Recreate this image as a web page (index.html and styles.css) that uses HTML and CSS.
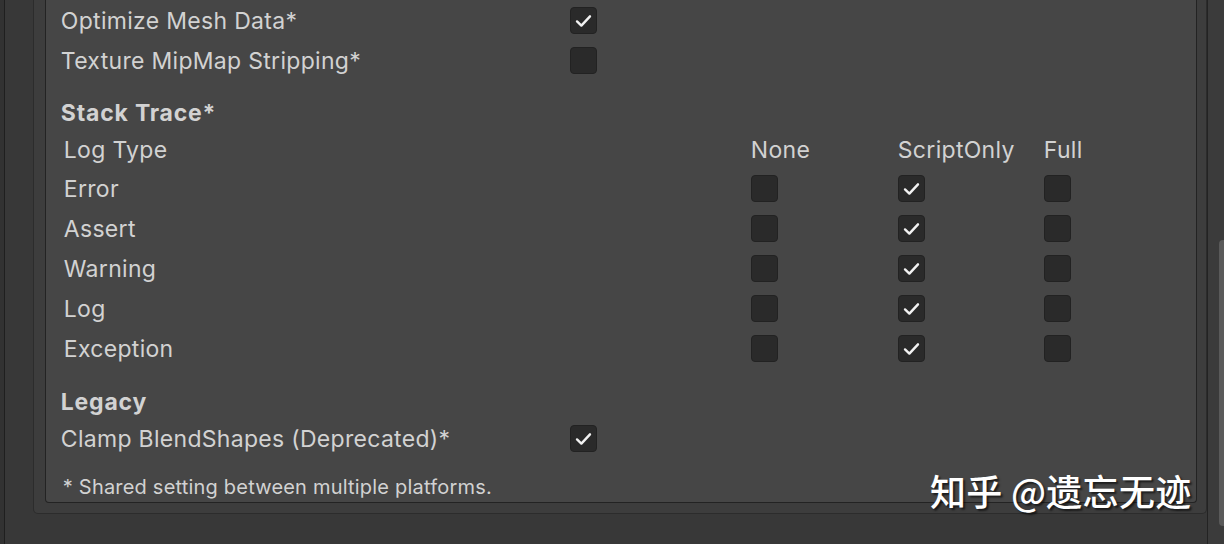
FILE: index.html
```html
<html>
    <head>
        <title>Player Settings</title>
        <meta charset="utf-8">
        <link rel="stylesheet" href="styles.css">
    </head>
    <body>
        <div class="sidebar"></div>
        <div class="main">
            <div class="frame">
                <div class="panel">
                    <div class="row">
                        <span class="label">Optimize Mesh Data*</span>
                        <span class="check"><svg viewBox="0 0 27 27"><polyline points="6.5,14.5 11.2,19 20.5,9"/></svg></span>
                    </div>
                    <div class="row">
                        <span class="label">Texture MipMap Stripping*</span>
                        <span class="check"></span>
                    </div>

                    <div class="heading stack">Stack Trace*</div>
                    <div class="trace">
                        <div class="trace-row trace-head">
                            <span>Log Type</span><span>None</span><span>ScriptOnly</span><span>Full</span>
                        </div>
                        <div class="trace-row">
                            <span>Error</span>
                            <span class="check"></span>
                            <span class="check"><svg viewBox="0 0 27 27"><polyline points="6.5,14.5 11.2,19 20.5,9"/></svg></span>
                            <span class="check"></span>
                        </div>
                        <div class="trace-row">
                            <span>Assert</span>
                            <span class="check"></span>
                            <span class="check"><svg viewBox="0 0 27 27"><polyline points="6.5,14.5 11.2,19 20.5,9"/></svg></span>
                            <span class="check"></span>
                        </div>
                        <div class="trace-row">
                            <span>Warning</span>
                            <span class="check"></span>
                            <span class="check"><svg viewBox="0 0 27 27"><polyline points="6.5,14.5 11.2,19 20.5,9"/></svg></span>
                            <span class="check"></span>
                        </div>
                        <div class="trace-row">
                            <span>Log</span>
                            <span class="check"></span>
                            <span class="check"><svg viewBox="0 0 27 27"><polyline points="6.5,14.5 11.2,19 20.5,9"/></svg></span>
                            <span class="check"></span>
                        </div>
                        <div class="trace-row">
                            <span>Exception</span>
                            <span class="check"></span>
                            <span class="check"><svg viewBox="0 0 27 27"><polyline points="6.5,14.5 11.2,19 20.5,9"/></svg></span>
                            <span class="check"></span>
                        </div>
                    </div>

                    <div class="heading legacy">Legacy</div>
                    <div class="row">
                        <span class="label">Clamp BlendShapes (Deprecated)*</span>
                        <span class="check"><svg viewBox="0 0 27 27"><polyline points="6.5,14.5 11.2,19 20.5,9"/></svg></span>
                    </div>

                    <div class="note">* Shared setting between multiple platforms.</div>
                </div>
            </div>
        </div>
        <div class="scroll"><div class="thumb"></div></div>
        <div class="watermark">知乎 @遗忘无迹</div>
    </body>
</html>
```

FILE: styles.css
```css
html {
    background-color: #383838;
}
body {
    margin: 0;
    height: 544px;
    display: flex;
    font-family: Inter, "Noto Sans", sans-serif;
    font-size: 23px;
    letter-spacing: 0.3px;
    color: #d2d2d2;
    overflow: hidden;
}
.sidebar {
    width: 4px;
    background-color: #323232;
    border-right: 1px solid #1f1f1f;
}
.main {
    flex: 1;
    padding-left: 28px;
}
.frame {
    width: 1152px;
    padding: 0 9px 10px 11px;
    background-color: #3d3d3d;
    border: 1px solid #2c2c2c;
    border-top: none;
    border-radius: 0 0 5px 5px;
}
.panel {
    background-color: #464646;
    border: 1px solid #232323;
    border-top: none;
    border-radius: 0 0 4px 4px;
    padding-left: 15px;
}
.row {
    display: flex;
    align-items: center;
    height: 40px;
}
.label {
    width: 509px;
    padding-top: 1px;
}
.check {
    width: 27px;
    height: 27px;
    box-sizing: border-box;
    background-color: #2a2a2a;
    border: 1px solid #222222;
    border-radius: 4px;
}
.check svg {
    display: block;
    width: 25px;
    height: 25px;
    fill: none;
    stroke: #f2f2f2;
    stroke-width: 2.6;
    stroke-linecap: round;
    stroke-linejoin: round;
}
.heading {
    font-weight: bold;
    letter-spacing: 0.8px;
    height: 34px;
    line-height: 35px;
}
.stack {
    margin-top: 16px;
}
.legacy {
    margin-top: 17px;
    height: 33px;
}
.trace {
    padding-left: 3px;
}
.trace-row {
    display: grid;
    grid-template-columns: 687px 147px 146px auto;
    align-items: center;
    height: 40px;
}
.trace-row span:not(.check) {
    padding-top: 1px;
}
.trace-head {
    height: 38px;
}
.note {
    margin-top: 14px;
    height: 30px;
    line-height: 30px;
    font-size: 20px;
    letter-spacing: 0.2px;
    padding-left: 2px;
}
.scroll {
    width: 17px;
    background-color: #3b3b3b;
    border-left: 1px solid #232323;
    position: relative;
}
.thumb {
    position: absolute;
    left: 11px;
    top: 240px;
    width: 8px;
    height: 286px;
    background-color: #5a5a5a;
    border-radius: 4px;
}
.watermark {
    position: absolute;
    left: 930px;
    top: 470px;
    font-family: "Noto Sans CJK SC", sans-serif;
    font-size: 36px;
    font-weight: 500;
    line-height: 40px;
    color: #ffffff;
    text-shadow: 2px 2px 2px rgba(0, 0, 0, 0.6);
}
```
